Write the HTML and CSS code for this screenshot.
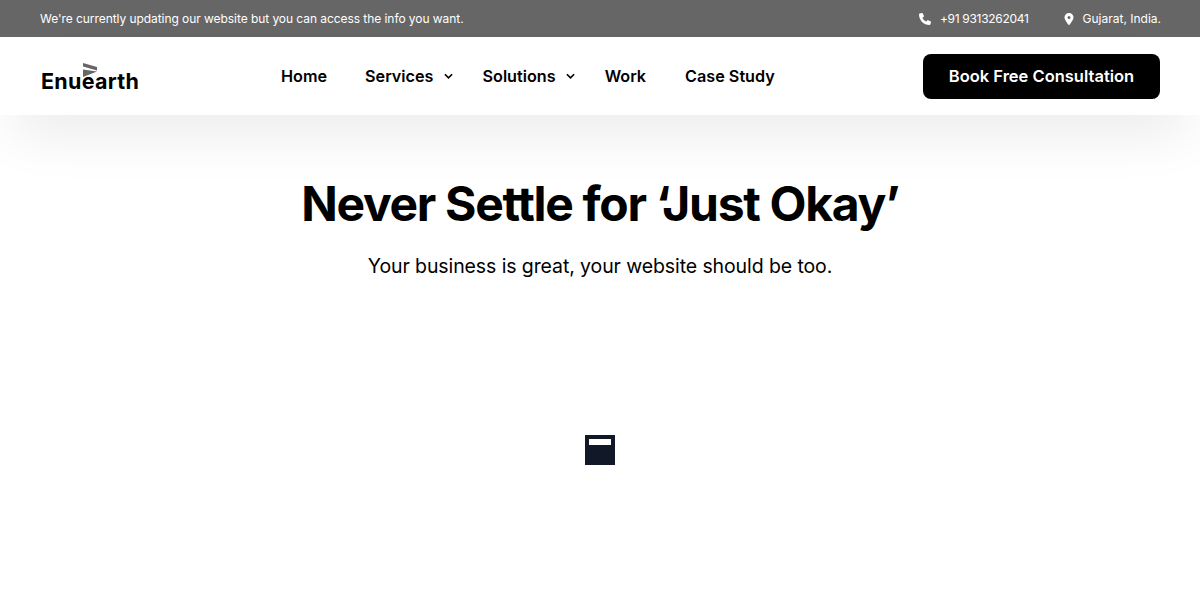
FILE: index.html
```html
<!DOCTYPE html>
<html lang="en">
<head>
    <meta charset="UTF-8">
    <meta name="viewport" content="width=device-width, initial-scale=1.0">
    <title>Enuearth</title>
    <link rel="stylesheet" href="styles.css">
</head>
<body>
    <div class="topbar">
        <span class="topbar-note">We're currently updating our website but you can access the info you want.</span>
        <div class="topbar-info">
            <span class="info-item info-phone">
                <svg class="info-icon" viewBox="0 0 512 512"><path d="M164.900 24.600c-7.700-18.600-28-28.500-47.400-23.200l-88 24C12.100 30.200 0 46 0 64C0 311.400 200.600 512 448 512c18 0 33.800-12.100 38.600-29.500l24-88c5.300-19.400-4.600-39.700-23.200-47.400l-96-40c-16.300-6.800-35.200-2.100-46.300 11.600L304.700 368C234.300 334.700 177.300 277.700 144 207.300L193.300 167c13.700-11.200 18.400-30 11.600-46.300l-40-96z"/></svg>
                +91 9313262041
            </span>
            <span class="info-item info-place">
                <svg class="info-icon" viewBox="0 0 384 512"><path d="M215.700 499.200C267 435 384 279.400 384 192C384 86 298 0 192 0S0 86 0 192c0 87.400 117 243 168.300 307.200c12.300 15.300 35.100 15.300 47.400 0zM192 128a64 64 0 1 1 0 128 64 64 0 1 1 0-128z"/></svg>
                Gujarat, India.
            </span>
        </div>
    </div>

    <header class="site-header">
        <a class="logo" href="#">
            <svg class="logo-mark" viewBox="0 0 14 14"><path d="M0 0l14 4v3.500L0 3.500z"/><path d="M0 6.500l14 2L0 14z"/></svg>
            <span class="logo-text">Enuearth</span>
        </a>
        <nav class="main-nav">
            <a class="nav-link nav-home" href="#">Home</a>
            <a class="nav-link nav-drop" href="#">Services
                <svg class="chevron" viewBox="0 0 10 6"><path d="M1 1l4 4 4-4"/></svg>
            </a>
            <a class="nav-link nav-drop" href="#">Solutions
                <svg class="chevron" viewBox="0 0 10 6"><path d="M1 1l4 4 4-4"/></svg>
            </a>
            <a class="nav-link nav-work" href="#">Work</a>
            <a class="nav-link" href="#">Case Study</a>
        </nav>
        <a class="cta" href="#">Book Free Consultation</a>
    </header>

    <main class="hero">
        <h1>Never Settle for ‘Just Okay’</h1>
        <p>Your business is great, your website should be too.</p>
        <div class="loader"><div class="loader-fill"></div></div>
    </main>
</body>
</html>
```

FILE: styles.css
```css
* {
    box-sizing: border-box;
}
body {
    margin: 0;
    font-family: "Inter", "Liberation Sans", sans-serif;
    background: #fff;
    color: #000;
    overflow: hidden;
}
a {
    color: inherit;
    text-decoration: none;
}
.topbar {
    height: 37px;
    background: #666;
    color: #fff;
    display: flex;
    justify-content: space-between;
    align-items: center;
    padding: 0 39px 0 40px;
    font-size: 12px;
}
.topbar-note {
    letter-spacing: -0.060px;
}
.topbar-info {
    display: flex;
    gap: 34px;
}
.info-item {
    display: flex;
    align-items: center;
    gap: 9px;
}
.info-phone {
    letter-spacing: -0.3px;
}
.info-place .info-icon {
    margin-right: -1px;
}
.info-icon {
    width: 12px;
    height: 12px;
    fill: #fff;
}
.site-header {
    height: 78px;
    background: #fff;
    display: flex;
    align-items: center;
    padding: 0 40px;
    box-shadow: 0 30px 55px -14px rgba(0, 0, 0, 0.095);
    position: relative;
}
.logo {
    width: 241px;
    position: relative;
    display: block;
}
.logo-text {
    font-size: 21.500px;
    font-weight: 700;
    letter-spacing: 0.3px;
    line-height: 28px;
    display: block;
    margin-top: 10px;
    margin-left: 1px;
}
.logo-mark {
    position: absolute;
    left: 43px;
    top: 6px;
    width: 14px;
    height: 14px;
    fill: #666;
}
.main-nav {
    display: flex;
    align-items: center;
    font-size: 16.200px;
    font-weight: 600;
}
.nav-link {
    display: flex;
    align-items: center;
}
.nav-home {
    margin-right: 38px;
}
.nav-drop {
    margin-right: 30px;
}
.nav-work {
    margin-right: 39px;
}
.chevron {
    width: 9px;
    height: 6px;
    margin-left: 10px;
    fill: none;
    stroke: #000;
    stroke-width: 1.800;
}
.cta {
    margin-left: auto;
    background: #000;
    color: #fff;
    font-size: 16.500px;
    font-weight: 600;
    width: 237px;
    height: 45px;
    border-radius: 8px;
    display: flex;
    align-items: center;
    justify-content: center;
}
.hero {
    display: flex;
    flex-direction: column;
    align-items: center;
    text-align: center;
}
.hero h1 {
    margin: 60px 0 0;
    font-size: 48px;
    line-height: 58px;
    font-weight: 700;
    letter-spacing: -1.300px;
}
.hero p {
    margin: 18px 0 0;
    font-size: 19.500px;
    line-height: 30px;
    letter-spacing: -0.100px;
}
.loader {
    margin-top: 154px;
    width: 30px;
    height: 30px;
    background: #111827;
    padding: 4px;
}
.loader-fill {
    height: 6px;
    background: #fff;
}
```
